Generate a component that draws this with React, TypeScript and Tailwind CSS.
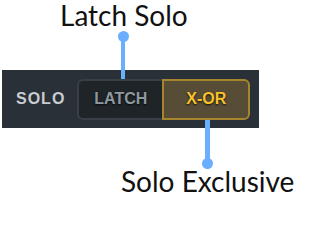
export default function App() {
  return (
    <div className="relative w-[300px] h-[200px] overflow-hidden bg-white font-['Lato',sans-serif]">
      {/* top callout */}
      <div className="ml-[60px] text-[28px] leading-[30px] text-[#111]">Latch Solo</div>

      {/* solo mode bar */}
      <div className="mt-[40px] ml-[2px] w-[257px] h-[58px] bg-[#2a3037] flex items-center pl-[14px] font-['Liberation_Sans',Arial,sans-serif] font-bold">
        <span className="text-[16px] tracking-[1px] text-[#c9ccd0]">SOLO</span>
        <div className="ml-[12px] flex h-[41px]">
          <div className="w-[85px] flex items-center justify-center bg-[#1f2428] border-2 border-r-0 border-[#383f46] rounded-l-[6px] text-[16px] text-[#8e999f] [text-shadow:0_1px_2px_rgba(0,0,0,0.8)]">
            LATCH
          </div>
          <div className="w-[88px] flex items-center justify-center bg-[#574d36] border-2 border-[#a5862f] rounded-r-[6px] text-[16px] text-[#f7c22c] [text-shadow:0_1px_2px_rgba(0,0,0,0.8)]">
            X-OR
          </div>
        </div>
      </div>

      {/* bottom callout */}
      <div className="mt-[38px] ml-[121px] text-[28px] leading-[30px] text-[#111]">Solo Exclusive</div>

      {/* connectors */}
      <div className="absolute left-[117.5px] top-[30.5px] flex flex-col items-center">
        <div className="w-[11px] h-[11px] rounded-full bg-[#6aaeff]" />
        <div className="w-[4.5px] h-[38px] -mt-[1px] bg-[#6aaeff]" />
      </div>
      <div className="absolute left-[202px] top-[120px] flex flex-col items-center">
        <div className="w-[4.5px] h-[39px] -mb-[1px] bg-[#6aaeff]" />
        <div className="w-[11px] h-[11px] rounded-full bg-[#6aaeff]" />
      </div>
    </div>
  );
}
